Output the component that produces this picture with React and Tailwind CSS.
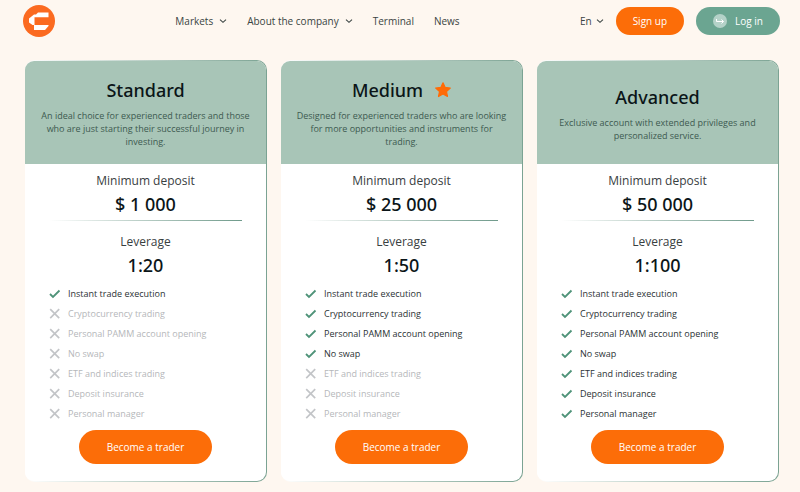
import React from "react";

const FEATURES = [
  "Instant trade execution",
  "Cryptocurrency trading",
  "Personal PAMM account opening",
  "No swap",
  "ETF and indices trading",
  "Deposit insurance",
  "Personal manager",
];

// included = how many features from the top of the list the plan has
const PLANS = [
  {
    name: "Standard",
    text: "An ideal choice for experienced traders and those who are just starting their successful journey in investing.",
    deposit: "$ 1 000",
    leverage: "1:20",
    included: 1,
  },
  {
    name: "Medium",
    text: "Designed for experienced traders who are looking for more opportunities and instruments for trading.",
    deposit: "$ 25 000",
    leverage: "1:50",
    included: 4,
    starred: true,
  },
  {
    name: "Advanced",
    text: "Exclusive account with extended privileges and personalized service.",
    deposit: "$ 50 000",
    leverage: "1:100",
    included: 7,
  },
];

function Logo() {
  return (
    <svg viewBox="0 0 32 32" className="size-8" aria-hidden="true">
      <circle cx="16" cy="16" r="16" fill="#fb6a20" />
      <path d="M15 7.500h10.500v4.800H11.500V20H9.500L6 17.500v-4l5-4h2z" fill="#fff" />
      <path d="M11 20h14.500v1L22 25H11z" fill="#fff" />
    </svg>
  );
}

function Chevron() {
  return (
    <svg viewBox="0 0 8 8" className="size-2" fill="none" stroke="#3a4442" strokeWidth="1.1" aria-hidden="true">
      <path d="M1 2.700l3 2.600 3-2.600" />
    </svg>
  );
}

function Check() {
  return (
    <svg viewBox="0 0 12 12" className="size-3 shrink-0" fill="none" stroke="#4f9379" strokeWidth="1.800" aria-hidden="true">
      <path d="M1 6l3 3 6.500-6.500" />
    </svg>
  );
}

function Cross() {
  return (
    <svg viewBox="0 0 12 12" className="size-3 shrink-0" fill="none" stroke="#c3c5c8" strokeWidth="1.700" aria-hidden="true">
      <path d="M1.200 1.200l9 9M10.200 1.200l-9 9" />
    </svg>
  );
}

function Star() {
  return (
    <svg viewBox="0 0 16 16" className="size-4" fill="#ff6b07" stroke="#ff6b07" strokeWidth="1.200" strokeLinejoin="round" aria-hidden="true">
      <path d="M8 .8l2.200 4.600 5.100.6-3.800 3.500 1 5L8 12l-4.500 2.500 1-5L.7 6l5.100-.6z" />
    </svg>
  );
}

function PlanCard({ plan }) {
  return (
    <section className="flex-1 rounded-[10px] bg-linear-to-r from-white to-[#7ba393] py-px pr-px">
      <div className="overflow-hidden rounded-[9px] bg-white text-center">
        <div className="flex h-[103px] flex-col items-center justify-center gap-[5px] bg-[#a8c5b7] px-3.5 pb-px">
          <h2 className="flex items-center gap-3 font-['Noto_Sans',sans-serif] text-[18px] leading-7 font-medium text-[#0b1518]">
            {plan.name}
            {plan.starred && <Star />}
          </h2>
          <p className="text-[9px] leading-[13px] text-[#3d5a50]">{plan.text}</p>
        </div>

        <div className="px-6 pt-2 pb-[17px]">
          <p className="text-[12px] leading-[18px] text-[#39403f]">Minimum deposit</p>
          <p className="font-['Noto_Sans',sans-serif] text-[18px] leading-7 font-medium text-[#0b1518]">{plan.deposit}</p>
          <div className="mt-0.5 h-px bg-linear-to-r from-white to-[#6f9a8b]" />
          <p className="mt-3 text-[12px] leading-[18px] text-[#39403f]">Leverage</p>
          <p className="font-['Noto_Sans',sans-serif] text-[18px] leading-7 font-medium text-[#0b1518]">{plan.leverage}</p>

          <ul className="mt-[5px]">
            {FEATURES.map((feature, i) => {
              const on = i < plan.included;
              return (
                <li key={feature} className={`flex h-5 items-center gap-[7px] text-[9px] ${on ? "text-[#2b3234]" : "text-[#b5b7ba]"}`}>
                  {on ? <Check /> : <Cross />}
                  {feature}
                </li>
              );
            })}
          </ul>

          <button type="button" className="mt-1.5 h-[34px] rounded-full bg-[#fc6d08] px-7 text-[10px] font-medium text-white">
            Become a trader
          </button>
        </div>
      </div>
    </section>
  );
}

export default function App() {
  return (
    <div className="min-h-screen bg-[#fef7f0] font-['Open_Sans','Noto_Sans',sans-serif]">
      <header className="flex h-[42px] items-center justify-between pr-5 pl-[23px] text-[10px] text-[#3a4442]">
        <a href="#" aria-label="Home">
          <Logo />
        </a>

        <nav className="flex items-center gap-5">
          <button type="button" className="flex items-center gap-1.5">
            Markets <Chevron />
          </button>
          <button type="button" className="flex items-center gap-1.5">
            About the company <Chevron />
          </button>
          <a href="#">Terminal</a>
          <a href="#">News</a>
        </nav>

        <div className="flex items-center">
          <button type="button" className="mr-3 flex items-center gap-1">
            En <Chevron />
          </button>
          <button type="button" className="mr-3 h-7 rounded-full bg-[#fc6d08] px-[17px] font-medium text-white">
            Sign up
          </button>
          <button type="button" className="flex h-7 items-center gap-2 rounded-full bg-[#6ba591] px-[17px] font-medium text-white">
            <svg viewBox="0 0 14 14" className="size-3.5" fill="none" stroke="#fff" aria-hidden="true">
              <circle cx="7" cy="7" r="7" fill="#b4d2c8" stroke="none" />
              <path d="M3.500 5v2.500h7M8.500 5.500l2 2-2 2" />
            </svg>
            Log in
          </button>
        </div>
      </header>

      <main className="flex gap-[14px] pt-[18px] pr-[21px] pb-[10px] pl-[25px]">
        {PLANS.map((plan) => (
          <PlanCard key={plan.name} plan={plan} />
        ))}
      </main>
    </div>
  );
}
